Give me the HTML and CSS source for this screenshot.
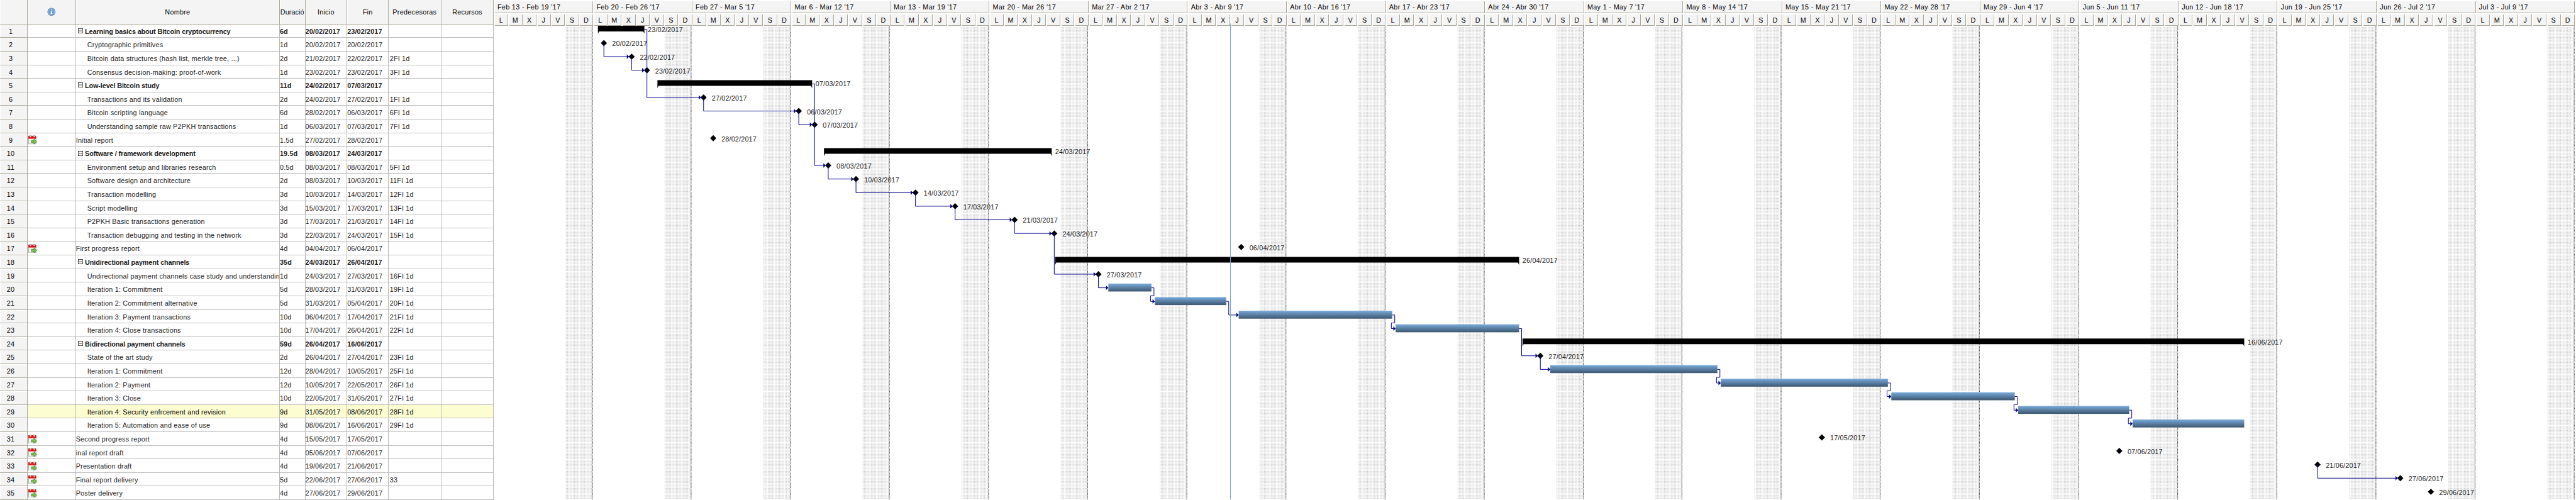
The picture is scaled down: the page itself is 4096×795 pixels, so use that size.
FILE: index.html
```html
<!DOCTYPE html>
<html lang="es">
<head>
<meta charset="utf-8">
<title>Gantt</title>
<link rel="stylesheet" href="styles.css">
</head>
<body>
<svg width="0" height="0" class="defs">
  <symbol id="cal" viewBox="0 0 16 16">
    <rect x="0.5" y="4" width="13" height="11.500" fill="#f1f1f1" stroke="#a4a4a4"/>
    <rect x="0" y="1" width="14" height="5.200" fill="#dd1414"/>
    <circle cx="3.800" cy="2" r="1.700" fill="#d8d8d8" stroke="#8d5a5a" stroke-width=".6"/>
    <circle cx="10.500" cy="2" r="1.700" fill="#d8d8d8" stroke="#8d5a5a" stroke-width=".6"/>
    <path d="M5.500 9.200h4.500V6.800l5 4.600-5 4.400v-2.600H5.500z" fill="#7cc04a" stroke="#3f8420" stroke-width=".9"/>
  </symbol>
</svg>
<div class="app">
  <div class="table">
    <div class="row head">
      <div></div>
      <div><svg class="info" viewBox="0 0 15 15"><circle cx="7.500" cy="7.500" r="7" fill="#4a7ab8"/><circle cx="7.500" cy="7.500" r="5.600" fill="#6b9ed2" stroke="#b9d2ea" stroke-width=".9"/><path d="M6.800 3.500h1.700v1.600H6.800zM6 6.300h2.500v3.900h.8v1H5.900v-1h.9V7.200H6z" fill="#fff"/></svg></div>
      <div>Nombre</div><div class="tight">Duració</div><div>Inicio</div><div>Fin</div><div>Predecesoras</div><div>Recursos</div>
    </div>
    <div id="rows"></div>
  </div>
  <div class="gantt">
    <div class="weeks" id="weeks"></div>
    <svg class="plot" id="plot" width="3675" height="836" viewBox="872 46 3675 836"></svg>
  </div>
</div>
<script src="app.js"></script>
</body>
</html>
```
FILE: styles.css
```css
* { box-sizing: border-box; }
html, body { margin: 0; background: #fff; overflow: hidden; }
body { font-family: "Liberation Sans", Arial, sans-serif; font-size: 12px; color: #1c1c1c; }
.defs { position: absolute; }
.app { zoom: 0.9008; display: flex; width: 4547px; height: 882px; overflow: hidden; }
.table { flex: none; width: 872px; }
.row { display: grid; grid-template-columns: 49px 85px 360px 45px 74px 73px 93px 93px; height: 24px; }
.row > div { border-right: 1px solid #b9b9b9; border-bottom: 1px solid #bcbcbc; line-height: 25px; white-space: nowrap; overflow: hidden; letter-spacing: 0.22px; }
.row.head { height: 43px; color: #000; }
.row.head > div { background: #f4f4f4; border-right: 1px solid #aca899; border-bottom: 1px solid #aca899; box-shadow: inset 1px 0 #fff; text-align: center; line-height: 43px; letter-spacing: 0.3px; }
.row.head > div.tight { text-align: left; padding-left: 1px; letter-spacing: 0.1px; }
.row > .num { background: #f4f4f4; border-color: #aca899; box-shadow: inset 1px 1px #fff; text-align: center; padding-right: 10px; color: #000; }
.row > .pred { padding-left: 2px; }
.row > .child { padding-left: 20px; }
.row.sum > div:not(.num) { font-weight: bold; letter-spacing: 0.15px; }
.row.sum > div.name { display: flex; align-items: flex-start; padding-left: 4px; letter-spacing: -0.11px; }
.row.sel > div:not(.num) { background: #fdfdd2; color: #000; }
.toggle { flex: none; width: 9px; height: 9px; margin: 7px 3px 0 0; }
.cal { display: block; width: 16px; height: 16px; margin: 4px 0 0 1px; }
.info { display: block; width: 15px; height: 15px; margin: 13px auto 0; }
.gantt { position: relative; flex: none; width: 3675px; }
.weeks { display: flex; height: 46px; padding: 2px 0 0 2px; color: #000; }
.week { flex: none; width: 174.9px; padding-right: 1.9px; }
.title { height: 21px; line-height: 21px; padding-left: 4px; background: #f4f4f4; border-right: 1px solid #aca899; border-bottom: 1px solid #aca899; white-space: nowrap; letter-spacing: 0.38px; }
.days { display: grid; grid-template-columns: repeat(7, 23px); justify-content: space-between; margin-top: 2px; }
.days span { height: 21px; line-height: 22px; text-align: center; padding-right: 1px; background: #f4f4f4; border-right: 1px solid #aca899; border-bottom: 1px solid #aca899; }
.plot { display: block; overflow: visible; }
.plot text { font-size: 12px; fill: #222; letter-spacing: 0.2px; }
.link { fill: none; stroke: #00008b; stroke-width: 1.100; }
.arrow { fill: #00008b; }
.sep { stroke: #000; stroke-width: 1.100; stroke-dasharray: 1 1; }
.today { stroke: #73a7da; stroke-width: 1.100; }
```
FILE: app.js
```js
// Each task: type (s summary, c child, r root), name, duration, start, end, predecessors,
// bar start, bar end (milestones have only a centre).
const tasks = [
  ['s','Learning basics about Bitcoin cryptocurrency','6d','20/02/2017','23/02/2017','',1056,1138],
  ['c','Cryptographic primitives','1d','20/02/2017','20/02/2017','',1066.5],
  ['c','Bitcoin data structures (hash list, merkle tree, ...)','2d','21/02/2017','22/02/2017','2FI 1d',1115.5],
  ['c','Consensus decision-making: proof-of-work','1d','23/02/2017','23/02/2017','3FI 1d',1142.5],
  ['s','Low-level Bitcoin study','11d','24/02/2017','07/03/2017','',1161,1434],
  ['c','Transactions and its validation','2d','24/02/2017','27/02/2017','1FI 1d',1242.5],
  ['c','Bitcoin scripting language','6d','28/02/2017','06/03/2017','6FI 1d',1410.5],
  ['c','Understanding sample raw P2PKH transactions','1d','06/03/2017','07/03/2017','7FI 1d',1438.5],
  ['r','Initial report','1.5d','27/02/2017','28/02/2017','',1259.5],
  ['s','Software / framework development','19.5d','08/03/2017','24/03/2017','',1455,1857],
  ['c','Environment setup and libraries research','0.5d','08/03/2017','08/03/2017','5FI 1d',1462.5],
  ['c','Software design and architecture','2d','08/03/2017','10/03/2017','11FI 1d',1511.5],
  ['c','Transaction modelling','3d','10/03/2017','14/03/2017','12FI 1d',1616.5],
  ['c','Script modelling','3d','15/03/2017','17/03/2017','13FI 1d',1686.5],
  ['c','P2PKH Basic transactions generation','3d','17/03/2017','21/03/2017','14FI 1d',1791.5],
  ['c','Transaction debugging and testing in the network','3d','22/03/2017','24/03/2017','15FI 1d',1861.5],
  ['r','First progress report','4d','04/04/2017','06/04/2017','',2191.5],
  ['s','Unidirectional payment channels','35d','24/03/2017','26/04/2017','',1863,2682],
  ['c','Undirectional payment channels case study and understandin','1d','24/03/2017','27/03/2017','16FI 1d',1939.5],
  ['c','Iteration 1: Commitment','5d','28/03/2017','31/03/2017','19FI 1d',1957,2033],
  ['c','Iteration 2: Commitment alternative','5d','31/03/2017','05/04/2017','20FI 1d',2039,2165],
  ['c','Iteration 3: Payment transactions','10d','06/04/2017','17/04/2017','21FI 1d',2187,2458],
  ['c','Iteration 4: Close transactions','10d','17/04/2017','26/04/2017','22FI 1d',2464,2682],
  ['s','Bidirectional payment channels','59d','26/04/2017','16/06/2017','',2688,3962],
  ['c','State of the art study','2d','26/04/2017','27/04/2017','23FI 1d',2719.5],
  ['c','Iteration 1: Commitment','12d','28/04/2017','10/05/2017','25FI 1d',2737,3032],
  ['c','Iteration 2: Payment','12d','10/05/2017','22/05/2017','26FI 1d',3038,3333],
  ['c','Iteration 3: Close','10d','22/05/2017','31/05/2017','27FI 1d',3339,3557],
  ['c','Iteration 4: Security enfrcement and revision','9d','31/05/2017','08/06/2017','28FI 1d',3563,3759],
  ['c','Iteration 5: Automation and ease of use','9d','08/06/2017','16/06/2017','29FI 1d',3765,3962],
  ['r','Second progress report','4d','15/05/2017','17/05/2017','',3216.5],
  ['r','inal report draft','4d','05/06/2017','07/06/2017','',3741.5],
  ['r','Presentation draft','4d','19/06/2017','21/06/2017','',4091.5],
  ['r','Final report delivery','5d','22/06/2017','27/06/2017','33',4237.5],
  ['r','Poster delivery','4d','27/06/2017','29/06/2017','',4291.5]
];
const toggle = '<svg class="toggle" viewBox="0 0 9 9"><rect x=".5" y=".5" width="8" height="8" fill="#fff" stroke="#333"/><path d="M2 4.500h5" stroke="#333"/></svg>';
document.getElementById('rows').innerHTML = tasks.map((t, i) => {
  const cls = (t[0] === 's' ? ' sum' : '') + (i === 28 ? ' sel' : '');
  return `<div class="row${cls}"><div class="num">${i + 1}</div>` +
    `<div>${t[0] === 'r' ? '<svg class="cal"><use href="#cal"/></svg>' : ''}</div>` +
    `<div class="name${t[0] === 'c' ? ' child' : ''}">${t[0] === 's' ? toggle : ''}<span>${t[1]}</span></div>` +
    `<div>${t[2]}</div><div>${t[3]}</div><div>${t[4]}</div><div class="pred">${t[5]}</div><div></div></div>`;
}).join('');

// Timeline header, one block per week.
const months = ['Ene','Feb','Mar','Abr','May','Jun','Jul'];
const label = d => `${months[d.getUTCMonth()]} ${d.getUTCDate()}`;
let head = '';
for (let w = 0; w < 21; w++) {
  const a = new Date(Date.UTC(2017, 1, 13 + 7 * w)), b = new Date(Date.UTC(2017, 1, 19 + 7 * w));
  head += `<div class="week"><div class="title">${label(a)} - ${label(b)} '17</div><div class="days">${[...'LMXJVSD'].map(c => `<span>${c}</span>`).join('')}</div></div>`;
}
document.getElementById('weeks').innerHTML = head;

const mid = n => 43 + 24 * (n - 1) + 9.5;
let s = `<defs><linearGradient id="bar" x2="0" y2="1"><stop offset="0" stop-color="#78abdb"/><stop offset="1" stop-color="#3d566e"/></linearGradient>
<pattern id="dots" width="2" height="2" patternUnits="userSpaceOnUse"><rect width="1" height="1" fill="#c0c0c0"/></pattern></defs>`;
for (let w = 0; w < 21; w++) {
  const x = Math.floor(874 + 174.9 * w);
  s += `<rect x="${x + 125}" y="48" width="47" height="834" fill="url(#dots)"/><path class="sep" d="M${x + 172.5} 47V882"/>`;
}
tasks.forEach((t, i) => {
  const y = mid(i + 1), a = t[6], b = t[7];
  if (t[0] === 's') {
    s += `<path d="M${a} ${y - 6.5}H${b}V${y + 7.5}L${b - 2} ${y + 3.5}H${a + 2}L${a} ${y + 7.5}z"/><text x="${b + 6}" y="${y + 4.5}">${t[4]}</text>`;
  } else if (b) {
    s += `<rect x="${a}" y="${y - 7.5}" width="${b - a}" height="14" fill="url(#bar)"/>`;
  } else {
    s += `<path d="M${a - 5.5} ${y}L${a} ${y - 5.5}L${a + 5.5} ${y}L${a} ${y + 5.5}z"/><text x="${a + 14.5}" y="${y + 5.5}">${t[4]}</text>`;
  }
});
// Dependencies: [from row, to row]
[[1,6],[2,3],[3,4],[5,11],[6,7],[7,8],[11,12],[12,13],[13,14],[14,15],[15,16],[16,19],[19,20],[20,21],[21,22],[22,23],[23,25],[25,26],[26,27],[27,28],[28,29],[29,30],[33,34]].forEach(([f, g]) => {
  const p = tasks[f - 1], q = tasks[g - 1], y1 = mid(f), y2 = mid(g);
  const end = q[7] ? q[6] : q[6] - 4.5;
  let d = p[7] ? `M${p[7]} ${y1}H${p[7] + 4.5}` : `M${p[6]} ${y1}`;
  if (p[7] && end - p[7] < 10) d += `V${y1 + 14}H${p[7] - 1.5}`;
  s += `<path class="link" d="${d}V${y2}H${end - 1}"/><path class="arrow" d="M${end - 4} ${y2 - 4}L${end} ${y2}L${end - 4} ${y2 + 4}z"/>`;
});
s += '<path class="today" d="M2172.5 42V882"/>';
document.getElementById('plot').innerHTML = s;
```
